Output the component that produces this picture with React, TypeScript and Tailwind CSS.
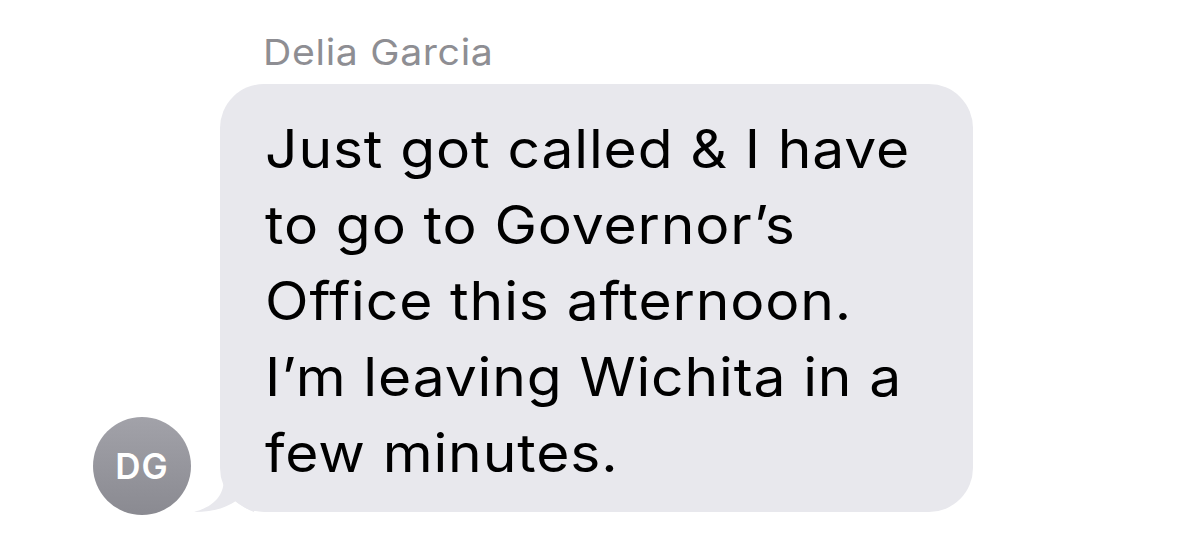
export default function App() {
  const lines = [
    'Just got called & I have',
    'to go to Governor\u2019s',
    'Office this afternoon.',
    'I\u2019m leaving Wichita in a',
    'few minutes.',
  ];

  return (
    <div className="w-[1200px] h-[547px] bg-white font-['Inter','Liberation_Sans',sans-serif] overflow-hidden">
      <div className="pl-[263px] pt-[32px] text-[36px] leading-[40px] tracking-[0.6px] text-[#8e8e93]">
        <div className="origin-left scale-x-[1.09]">Delia Garcia</div>
      </div>
      <div className="flex items-end pl-[93px] pt-[12px]">
        <div className="w-[98px] h-[98px] rounded-full bg-gradient-to-b from-[#a2a2a9] to-[#8a8a91] flex items-center justify-center text-white font-semibold text-[35px] tracking-[1px] mb-[-3px]">
          DG
        </div>
        <div className="relative ml-[29px] w-[753px] rounded-[44px] bg-[#e8e8ed] pl-[45px] pt-[27px] pb-[21px]">
          <svg className="absolute left-[-26px] bottom-0" width="60" height="44" viewBox="0 0 60 44">
            <path d="M30 0 L30 10 C30 26 22 38 0 44 C18 44 32 40 42 33 C48 38 54 42 60 44 L60 0 Z" fill="#e8e8ed" />
          </svg>
          <div className="relative origin-left scale-x-[1.075] text-[53px] leading-[76px] text-black tracking-[0.8px]">
            {lines.map((l) => (
              <div key={l} className="whitespace-nowrap">{l}</div>
            ))}
          </div>
        </div>
      </div>
    </div>
  );
}
